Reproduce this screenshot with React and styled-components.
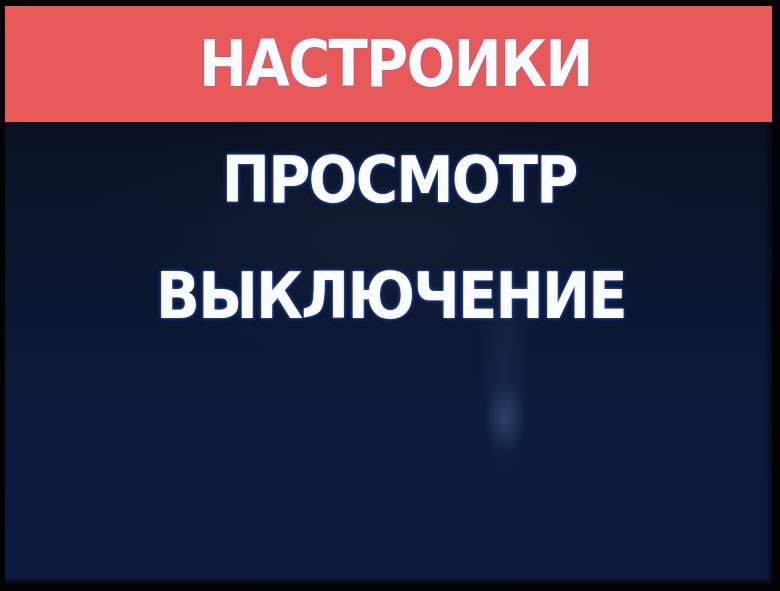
import React from "react";
import styled, { createGlobalStyle } from "styled-components";

const GlobalStyle = createGlobalStyle`
  html, body {
    margin: 0;
    padding: 0;
    background: #020205;
  }
`;

const Bezel = styled.div`
  width: 780px;
  height: 591px;
  box-sizing: border-box;
  padding: 6px 8px 8px 5px;
  background: #020205;
`;

const Screen = styled.div`
  height: 100%;
  display: flex;
  flex-direction: column;
  box-shadow: inset -3px -3px 4px rgba(0, 0, 0, 0.6);
  background:
    radial-gradient(ellipse 28px 50px at 500px 412px, rgba(90, 125, 175, 0.35), transparent 75%),
    radial-gradient(ellipse 40px 140px at 500px 360px, rgba(60, 85, 130, 0.22), transparent 80%),
    radial-gradient(ellipse 380px 160px at 380px 230px, rgba(25, 35, 55, 0.55), transparent 80%),
    linear-gradient(180deg, #070d1a 0%, #09142a 35%, #0b1a3a 70%, #0b1b40 100%);
`;

const MenuItem = styled.div`
  height: 116px;
  display: flex;
  align-items: center;
  justify-content: center;
  padding-left: ${(p) => p.$shift}px;
  background: ${(p) => (p.$active ? "#e85a5a" : "transparent")};
  font-family: "DejaVu Sans", "Liberation Sans", sans-serif;
  font-weight: bold;
  font-size: 64px;
  letter-spacing: -2px;
  color: #fbfcff;
  text-shadow: ${(p) =>
    p.$active
      ? "0 0 1px rgba(70, 60, 170, 0.9)"
      : "0 0 2px rgba(80, 130, 255, 0.9), 0 0 6px rgba(50, 100, 255, 0.5)"};
`;

const Label = styled.span`
  display: inline-block;
  transform: scaleX(0.9);
`;

const items = [
  { name: "НАСТРОИКИ", shift: 14 },
  { name: "ПРОСМОТР", shift: 22 },
  { name: "ВЫКЛЮЧЕНИЕ", shift: 4 },
];

export default function App() {
  return (
    <>
      <GlobalStyle />
      <Bezel>
        <Screen>
          {items.map((item, i) => (
            <MenuItem key={item.name} $active={i === 0} $shift={item.shift}>
              <Label>{item.name}</Label>
            </MenuItem>
          ))}
        </Screen>
      </Bezel>
    </>
  );
}
